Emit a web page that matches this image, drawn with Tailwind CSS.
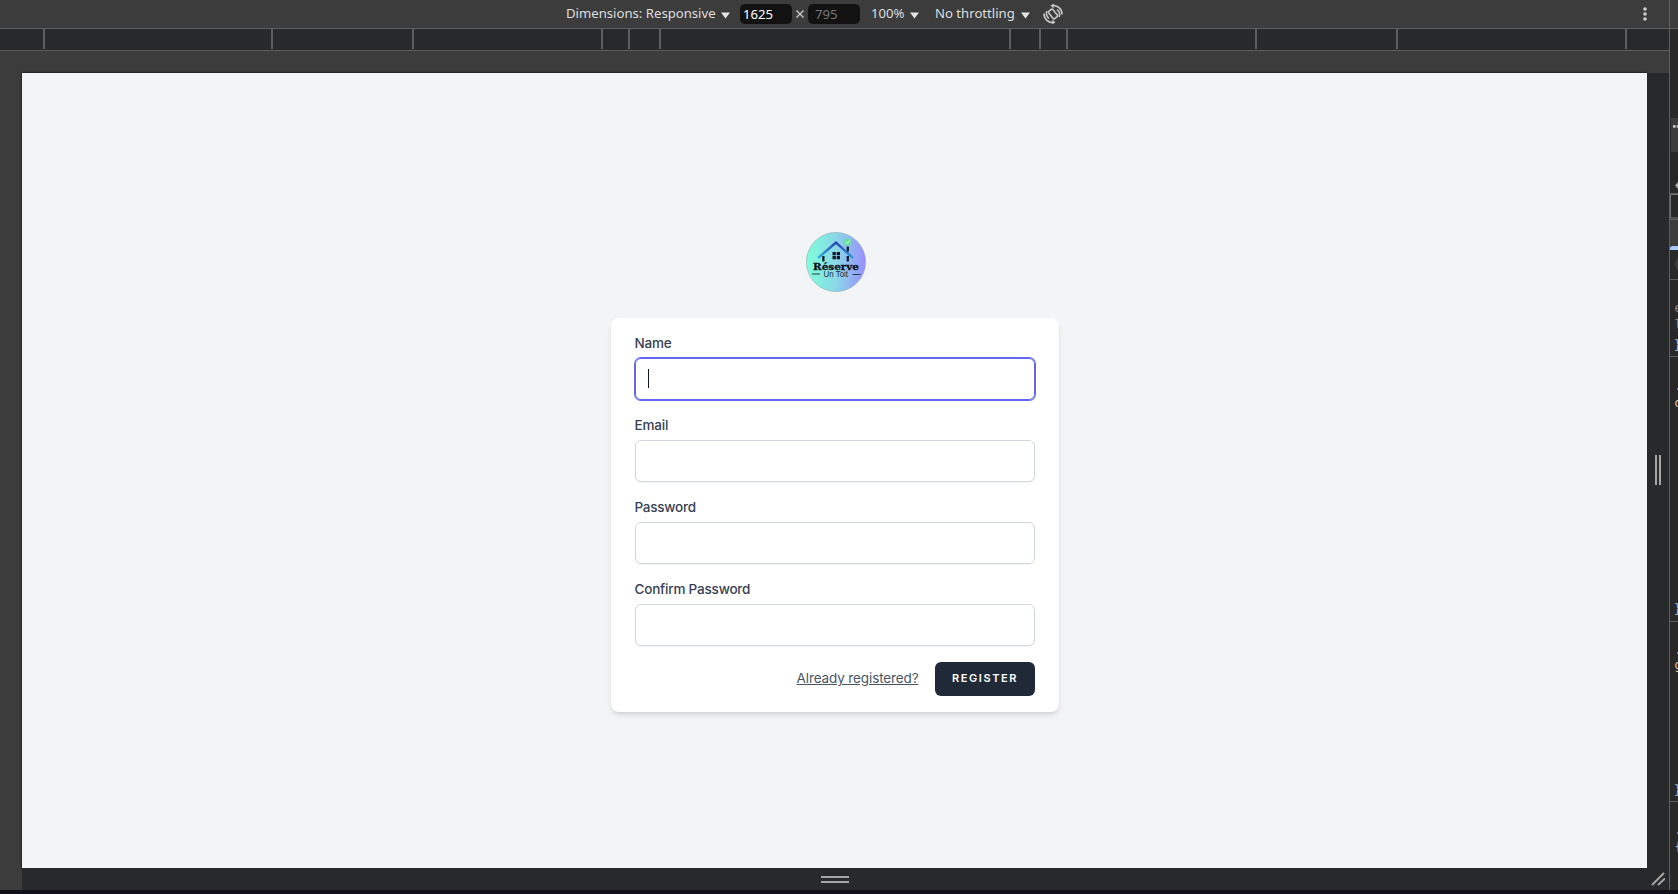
<!DOCTYPE html>
<html lang="en">
<head>
<meta charset="utf-8">
<title>Reserve Un Toit - Register</title>
<script src="https://cdn.jsdelivr.net/npm/@tailwindcss/browser@4"></script>
</head>
<body class="w-[1678px] h-[894px] overflow-hidden bg-[#12111a] flex flex-col font-['Noto_Sans',sans-serif]">
<div class="flex h-[890px]">
  <div class="w-[1669px] shrink-0 flex flex-col">
    <!-- device toolbar -->
    <div class="h-7 bg-[#3c3c3c] flex items-center text-[13.15px] text-[#dedede] pl-[566px] pb-px whitespace-nowrap">
      <span class="w-[151px] shrink-0">Dimensions: Responsive</span>
      <svg class="w-[23px] h-7 shrink-0" viewBox="0 0 23 28"><path d="M4 12.5h9l-4.500 6z" fill="#e3e3e3"/></svg>
      <span class="w-[52px] h-5 rounded-[5px] bg-[#121212] text-white leading-5 pl-[3px] shrink-0">1625</span>
      <svg class="w-4 h-7 shrink-0" viewBox="0 0 16 28"><path d="M4.500 10.500l7 7M11.500 10.500l-7 7" stroke="#c7c7c7" stroke-width="1.400"/></svg>
      <span class="w-[52px] h-5 rounded-[5px] bg-[#121212] text-[#757575] leading-5 pl-[7px] shrink-0">795</span>
      <span class="w-[35px] ml-[11px] shrink-0">100%</span>
      <svg class="w-[29px] h-7 shrink-0" viewBox="0 0 29 28"><path d="M4 12.500h9l-4.500 6z" fill="#e3e3e3"/></svg>
      <span class="w-[80px] shrink-0">No throttling</span>
      <svg class="w-[28px] h-7 shrink-0" viewBox="0 0 28 28"><path d="M6 12.500h9l-4.500 6z" fill="#e3e3e3"/></svg>
      <svg class="w-5 h-5 shrink-0" viewBox="0 0 20 20" fill="none" stroke="#c7c7c7" stroke-width="1.600">
        <rect x="7.300" y="5.300" width="5.400" height="9.400" rx="1" transform="rotate(-38 10 10)"/>
        <path d="M1 9.500A9 9 0 0 0 11 18.600M19 10.500A9 9 0 0 0 9 1.400M3.800 7A7 7 0 0 0 6 14.500M16.200 13A7 7 0 0 0 14 5.500"/>
        <path d="M9.500 15.500l3 3-3.500 1.500zM10.500 4.500l-3-3 3.500-1.500z" fill="#c7c7c7" stroke="none"/>
      </svg>
      <svg class="w-1 h-4 ml-[580px] shrink-0" viewBox="0 0 4 16" fill="#d0d0d0"><circle cx="2" cy="3" r="1.800"/><circle cx="2" cy="8" r="1.800"/><circle cx="2" cy="13" r="1.800"/></svg>
    </div>
    <!-- media query ruler -->
    <div class="h-[23px] bg-[#28292a] border-y border-[#5e5e5e]">
      <svg class="w-[1669px] h-5" fill="#5e5e5e"><path d="M43 0h2v20h-2zM271 0h2v20h-2zM412 0h2v20h-2zM601 0h2v20h-2zM628 0h2v20h-2zM659 0h2v20h-2zM1009 0h2v20h-2zM1039 0h2v20h-2zM1066 0h2v20h-2zM1255 0h2v20h-2zM1396 0h2v20h-2zM1625 0h2v20h-2z"/></svg>
    </div>
    <div class="h-[22px] bg-[#3c3c3c]"></div>
    <div class="flex h-[817px]">
      <div class="w-[22px] bg-[#3c3c3c]"></div>
      <div class="w-[1625px] flex flex-col">
        <main class="h-[795px] bg-gray-100 flex flex-col items-center pt-[159px] font-[Inter,sans-serif] shadow-[0_0_2px_#000]">
          <svg class="w-[60px] h-[60px] ml-[2px]" viewBox="0 0 60 60">
            <defs>
              <linearGradient id="disc"><stop offset="0" stop-color="#7effd9"/><stop offset=".5" stop-color="#8bd7e8"/><stop offset="1" stop-color="#9a8fff"/></linearGradient>
              <linearGradient id="roof"><stop offset="0" stop-color="#35b5e0"/><stop offset=".5" stop-color="#2b45b0"/><stop offset="1" stop-color="#2e9bd8"/></linearGradient>
            </defs>
            <circle cx="30" cy="30" r="29.600" fill="url(#disc)" stroke="#8fa9b5" stroke-width=".6"/>
            <path d="M12 26L30 10.500L47 26" fill="none" stroke="url(#roof)" stroke-width="2.400"/>
            <path d="M16.300 24h2.200v5.500h-2.200zM40.700 24h2.200v5.500h-2.200zM40.700 14.500h2.200v5h-2.200zM26.500 20h3.300v3.200h-3.300zM30.700 20h3.300v3.200h-3.300zM26.500 24h3.300v3.200h-3.300zM30.700 24h3.300v3.200h-3.300z" fill="#0d1526"/>
            <circle cx="41.500" cy="10" r="3.700" fill="#67dfa0"/>
            <path d="M39.800 10l1.300 1.400 2.300-2.700" fill="none" stroke="#eafff2" stroke-width="1"/>
            <text x="7" y="37.500" textLength="46" lengthAdjust="spacingAndGlyphs" font-family="DejaVu Serif" font-weight="bold" font-size="9.500" fill="#0a0f18" stroke="#0a0f18" stroke-width=".3">Réserve</text>
            <text x="17.500" y="45.300" textLength="24.500" lengthAdjust="spacingAndGlyphs" font-family="Liberation Sans" font-size="8.500" fill="#16303c">Un Toit</text>
            <path d="M6 42h8M46.500 42.500h8" stroke="#22404a" stroke-width="1"/>
          </svg>
          <form class="mt-[26px] w-[448px] h-[394px] bg-white rounded-lg shadow-md px-6 py-4 text-sm text-gray-700">
            <label class="block h-5 leading-[18px] text-[13.500px] font-medium tracking-[-0.2px]">Name</label>
            <div class="mt-1 h-[42px] rounded-md border border-[#6366f1] ring-1 ring-[#6366f1] pl-3 pb-[2px] flex items-center"><div class="w-px h-[19px] bg-gray-900"></div></div>
            <label class="mt-4 block h-5 leading-[18px] text-[13.500px] font-medium tracking-[-0.2px]">Email</label>
            <div class="mt-1 h-[42px] rounded-md border border-gray-300 shadow-xs"></div>
            <label class="mt-4 block h-5 leading-[18px] text-[13.500px] font-medium tracking-[-0.25px]">Password</label>
            <div class="mt-1 h-[42px] rounded-md border border-gray-300 shadow-xs"></div>
            <label class="mt-4 block h-5 leading-[18px] text-[13.500px] font-medium tracking-[-0.2px]">Confirm Password</label>
            <div class="mt-1 h-[42px] rounded-md border border-gray-300 shadow-xs"></div>
            <div class="mt-4 flex justify-end items-center">
              <a class="underline text-gray-600 text-[13.500px] tracking-[-0.12px] pb-px">Already registered?</a>
              <div class="ml-4 w-[100px] h-[34px] rounded-md bg-[#1f2937] text-white text-[11px] font-semibold tracking-[1.600px] pl-px flex items-center justify-center">REGISTER</div>
            </div>
          </form>
        </main>
        <div class="h-[22px] bg-[#28292a] flex flex-col items-center pt-2 gap-[3px]">
          <div class="w-7 h-[2px] bg-[#a5a5a5]"></div>
          <div class="w-7 h-[2px] bg-[#a5a5a5]"></div>
        </div>
      </div>
      <div class="w-[22px] bg-[#28292a] flex flex-col items-center justify-between pt-[382px] pb-1">
        <div class="flex gap-[2px]">
          <div class="w-[2px] h-[30px] bg-[#a5a5a5]"></div>
          <div class="w-[2px] h-[30px] bg-[#a5a5a5]"></div>
        </div>
        <svg class="w-[14px] h-[14px]" viewBox="0 0 14 14" stroke="#a5a5a5" stroke-width="2"><path d="M1 13L13 1M7 13L14 6.500"/></svg>
      </div>
    </div>
  </div>
  <div class="w-px bg-[#5e5e5e] shrink-0"></div>
  <!-- visible edge of the inspector -->
  <div class="w-2 bg-[#282828] shrink-0 overflow-hidden">
    <svg class="w-2 h-[890px]" viewBox="0 0 8 890" font-family="DejaVu Sans Mono" font-size="12">
      <path d="M0 0h8v28H0zM1 118h7v34H1zM0 220h8v26H0z" fill="#3c3c3c"/>
      <path d="M0 28h8v1H0zM0 193h8v1H0zM0 219h8v1H0zM0 279h8v1H0zM0 356h8v1H0zM0 621h8v1H0zM0 801h8v1H0z" fill="#5e5e5e"/>
      <path d="M9 194.500H.5v23.500H9" fill="none" stroke="#757575"/>
      <path d="M0 250v-2q0-2 3-2h5v4z" fill="#a8c7fa"/>
      <circle cx="4.300" cy="126.500" r="1.400" fill="#d0d0d0"/><circle cx="8" cy="126.500" r="1.400" fill="#d0d0d0"/>
      <path d="M8 182l-3 3.500 3 3.500z" fill="#a5a5a5"/>
      <circle cx="13" cy="264" r="8" fill="#3c3c3c"/>
      <g fill="#8f8f8f"><text x="4.500" y="312">e</text><text x="4.500" y="329">l</text></g>
      <g fill="#9fc3d8"><text x="4" y="349">}</text><text x="4" y="613">}</text><text x="4" y="794">}</text><text x="4.500" y="390">.</text><text x="4.500" y="654">.</text><text x="4.500" y="834">.</text><text x="4.500" y="851">{</text></g>
      <g fill="#e8c9a0"><text x="4.500" y="407">d</text><text x="4.500" y="669">g</text></g>
    </svg>
  </div>
</div>
</body>
</html>
